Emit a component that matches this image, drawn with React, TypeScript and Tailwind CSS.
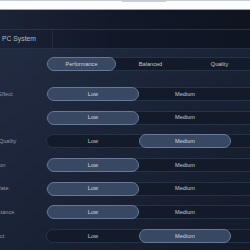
import React from "react";

type Row = {
  label: string;
  options: string[];
  selected: number;
};

const rows: Row[] = [
  { label: "Screen Effect", options: ["Low", "Medium", "High"], selected: 0 },
  { label: "Glow", options: ["Low", "Medium", "High"], selected: 0 },
  { label: "Texture Quality", options: ["Low", "Medium", "High"], selected: 1 },
  { label: "Resolution", options: ["Low", "Medium", "High"], selected: 0 },
  { label: "Frame Rate", options: ["Low", "Medium", "High"], selected: 0 },
  { label: "View Distance", options: ["Low", "Medium", "High"], selected: 0 },
  { label: "Fog Effect", options: ["Low", "Medium", "High"], selected: 1 },
];

function Segmented({ options, selected, segWidth }: { options: string[]; selected: number; segWidth: string }) {
  return (
    <div className="flex h-[14px] shrink-0 rounded-full border border-[#283247] bg-[#131a29]">
      {options.map((opt, i) => (
        <div
          key={opt}
          className={
            i === selected
              ? `${segWidth} -my-px flex h-[14px] shrink-0 items-center justify-center rounded-full border border-[#687895] bg-[#384762] text-[5.6px] text-[#d3d7de]`
              : `${segWidth} flex h-full shrink-0 items-center justify-center text-[5.6px] text-[#c3c8d1]`
          }
        >
          {opt}
        </div>
      ))}
    </div>
  );
}

export default function App() {
  return (
    <div className="relative h-[250px] w-[250px] overflow-hidden bg-[#161d2d] font-['Liberation_Sans',sans-serif]">
      {/* browser strip */}
      <div className="h-[10px] border-t border-b border-t-[#c6cad1] border-b-[#9ea3ad] bg-[#fbfcfd]">
        <div className="ml-[122px] h-[1px] w-[44px] bg-[#c7cfea]" />
      </div>

      {/* title bar */}
      <div className="h-[20px] border-b border-[#293246] bg-gradient-to-r from-[#1b2336] via-[#121827] to-[#0f141f]" />

      {/* tab bar */}
      <div className="flex h-[19px] items-stretch border-b border-[#263045] bg-gradient-to-r from-[#1a2236] via-[#111727] to-[#0f1522]">
        <div className="flex w-[53px] items-center border-r border-[#242c3d] pl-[2px] text-[6.8px] text-[#b4bac6]">
          PC System
        </div>
      </div>

      {/* content */}
      <div className="flex flex-col bg-gradient-to-br from-[#222b41] via-[#1a2236] to-[#131a29] pt-[8px] pb-[10px]">
        <div className="-ml-[21px] flex items-center">
          <div className="w-[67px] shrink-0" />
          <Segmented options={["Performance", "Balanced", "Quality"]} selected={0} segWidth="w-[69px]" />
        </div>

        <div className="mt-[16px] flex flex-col gap-[9.67px]">
          {rows.map((row) => (
            <div key={row.label} className="-ml-[21px] flex items-center">
              <div className="w-[67px] shrink-0 whitespace-nowrap text-[5.6px] text-[#8f98a9]">{row.label}</div>
              <Segmented options={row.options} selected={row.selected} segWidth="w-[92px]" />
            </div>
          ))}
        </div>
      </div>
    </div>
  );
}
